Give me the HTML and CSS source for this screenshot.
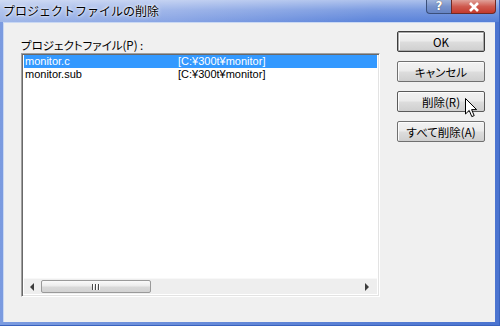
FILE: index.html
```html
<!DOCTYPE html>
<html>
<head>
<meta charset="utf-8">
<link rel="stylesheet" href="styles.css">
</head>
<body>
<div class="window">
  <div class="titlebar">
    <span class="title">プロジェクトファイルの削除</span>
    <div class="caption-btns">
      <div class="cap help">?</div>
      <div class="cap close">
        <svg width="14" height="10" viewBox="0 0 14 10"><path d="M3 1 L11 9 M11 1 L3 9" stroke="#fff" stroke-width="2.6" fill="none"/></svg>
      </div>
    </div>
  </div>
  <div class="client">
    <div class="leftcol">
      <div class="label">プロジェクトファイル(P) :</div>
      <div class="listbox">
        <div class="rows">
          <div class="row selected"><span class="c1">monitor.c</span><span class="c2">[C:¥300t¥monitor]</span></div>
          <div class="row"><span class="c1">monitor.sub</span><span class="c2">[C:¥300t¥monitor]</span></div>
        </div>
        <div class="hscroll">
          <div class="arrow left"></div>
          <div class="thumb"><span class="grip"></span><span class="grip"></span><span class="grip"></span></div>
          <div class="track"></div>
          <div class="arrow right"></div>
        </div>
      </div>
    </div>
    <div class="buttons">
      <div class="btn default">OK</div>
      <div class="btn">キャンセル</div>
      <div class="btn hover">削除(R)</div>
      <div class="btn">すべて削除(A)</div>
    </div>
  </div>
  <svg class="cursor" width="13" height="20" viewBox="0 0 13 20">
    <path d="M0.5 0.5 L0.5 16 L4.2 12.4 L6.8 18.6 L9.2 17.6 L6.6 11.6 L11.6 11.6 Z" fill="#fff" stroke="#000" stroke-width="1" stroke-linejoin="miter"/>
  </svg>
</div>
</body>
</html>
```

FILE: styles.css
```css
html, body {
  margin: 0;
  padding: 0;
}
body {
  width: 500px;
  height: 326px;
  overflow: hidden;
  font-family: "Noto Sans CJK JP", "Liberation Sans", sans-serif;
  font-size: 12px;
}
.window {
  position: relative;
  width: 500px;
  height: 326px;
  box-sizing: border-box;
  background: linear-gradient(90deg, #7b9be0 0%, #5d83d6 60%, #4b74d0 100%);
  display: flex;
  flex-direction: column;
  border-bottom: 1px solid #3a63be;
  border-right: 1px solid #3a63be;
}
.titlebar {
  height: 22px;
  display: flex;
  align-items: flex-start;
  background: linear-gradient(180deg, rgba(255,255,255,0.5) 0%, rgba(255,255,255,0.2) 45%, rgba(255,255,255,0) 100%),
              linear-gradient(90deg, #9fb6e8 0%, #88a4e4 35%, #5c84da 75%, #5680d8 100%);
}
.title {
  padding-left: 3px;
  padding-top: 2px;
  font-size: 12px;
  line-height: 18px;
  color: #000;
  text-shadow: 0 0 4px #fff, 0 0 2px #fff;
}
.caption-btns {
  margin-left: auto;
  margin-right: 3px;
  display: flex;
}
.cap {
  height: 13px;
  border: 1px solid #3b4f7a;
  border-top: none;
  display: flex;
  align-items: center;
  justify-content: center;
  color: #fff;
  font-family: "DejaVu Sans", sans-serif;
  font-weight: bold;
  font-size: 12px;
  line-height: 13px;
}
.help {
  width: 24px;
  border-radius: 0 0 0 4px;
  background: linear-gradient(180deg, #9fb4dc 0%, #7893cc 50%, #6684c4 100%);
  border-right: none;
  text-shadow: 0 0 1px #333;
}
.close {
  width: 43px;
  border-radius: 0 0 4px 0;
  background: linear-gradient(180deg, #e0a199 0%, #cf5a4f 50%, #c4392c 100%);
  border-color: #6e2a26;
}
.client {
  flex: 1;
  margin: 0 4px 3px 3px;
  background: #f0f0f0;
  border-left: 1px solid #c9d8f3;
  border-top: 1px solid #c9d8f3;
  display: flex;
  padding: 8px 0 0 17px;
  box-sizing: border-box;
}
.leftcol {
  margin-top: 7px;
  width: 359px;
}
.label {
  height: 14px;
  line-height: 14px;
  color: #000;
  margin-bottom: 1px;
  font-size: 11.5px;
  font-feature-settings: "palt" 1;
}
.listbox {
  width: 359px;
  height: 244px;
  box-sizing: border-box;
  background: #fff;
  border-top: 1px solid #a0a0a0;
  border-left: 1px solid #a0a0a0;
  border-right: 1px solid #fff;
  border-bottom: 1px solid #fff;
  box-shadow: inset 1px 1px 0 #696969, inset -1px -1px 0 #e3e3e3;
  padding: 1px;
  display: flex;
  flex-direction: column;
}
.rows {
  flex: 1;
  padding-left: 1px;
}
.row {
  height: 13px;
  line-height: 13px;
  display: flex;
  color: #000;
  font-family: "Liberation Sans", "Noto Sans CJK JP", sans-serif;
  font-size: 11px;
  overflow: hidden;
}
.row.selected {
  background: #3399ff;
  color: #fff;
  margin-right: 1px;
}
.c1 {
  box-sizing: border-box;
  width: 154px;
  padding-left: 1px;
}
.hscroll {
  height: 15px;
  display: flex;
  align-items: center;
  background: #eeeeee;
  border-top: 1px solid #f8f8f8;
  margin: 0 1px 1px 1px;
}
.arrow {
  width: 16px;
  height: 15px;
  position: relative;
}
.arrow.left::after {
  content: "";
  position: absolute;
  left: 6px;
  top: 4px;
  border-right: 4px solid #3c3c3c;
  border-top: 4px solid transparent;
  border-bottom: 4px solid transparent;
}
.arrow.right::after {
  content: "";
  position: absolute;
  left: 4px;
  top: 4px;
  border-left: 4px solid #3c3c3c;
  border-top: 4px solid transparent;
  border-bottom: 4px solid transparent;
}
.thumb {
  width: 110px;
  height: 13px;
  box-sizing: border-box;
  border: 1px solid #9a9a9a;
  border-radius: 2px;
  background: linear-gradient(180deg, #fafafa 0%, #ececec 45%, #d9d9d9 55%, #d2d2d2 100%);
  display: flex;
  align-items: center;
  justify-content: center;
  gap: 1px;
  margin-left: 1px;
}
.grip {
  width: 1px;
  height: 6px;
  background: #4a4a4a;
  border-right: 1px solid #fff;
}
.track {
  flex: 1;
}
.buttons {
  margin-left: 17px;
  display: flex;
  flex-direction: column;
  gap: 9px;
}
.btn {
  width: 88px;
  height: 21px;
  box-sizing: border-box;
  border: 1px solid #707070;
  border-radius: 2px;
  background: linear-gradient(180deg, #f2f2f2 0%, #ebebeb 48%, #dddddd 52%, #cfcfcf 100%);
  box-shadow: inset 1px 1px 0 #fcfcfc;
  display: flex;
  align-items: center;
  justify-content: center;
  color: #000;
  line-height: 14px;
  font-size: 11.5px;
  font-feature-settings: "palt" 1;
}
.btn.default {
  border-color: #3c3c3c;
  box-shadow: inset 0 0 0 1px #a9a9a9, inset 2px 2px 0 #fcfcfc;
}
.btn.hover {
  border-color: #5a5a5a;
}
.cursor {
  position: absolute;
  left: 465px;
  top: 98px;
}
```
